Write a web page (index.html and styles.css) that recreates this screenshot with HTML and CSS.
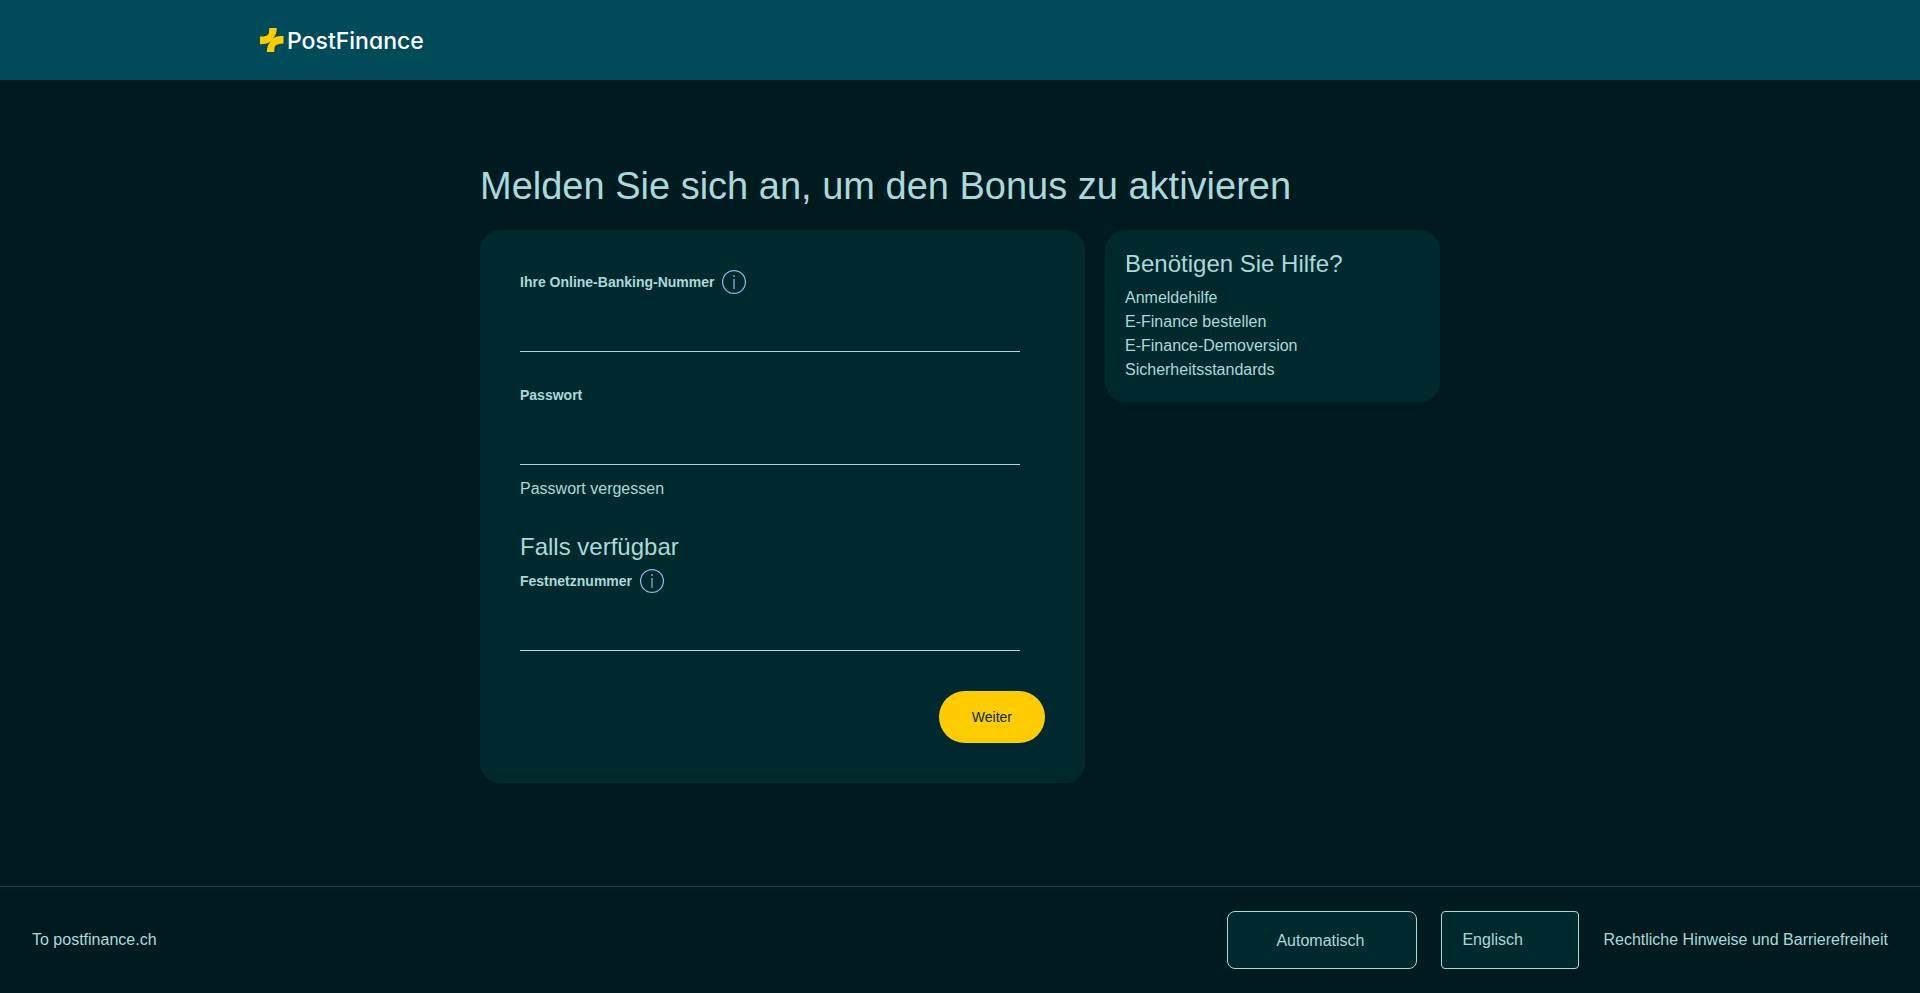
FILE: index.html
```html
<!DOCTYPE html>
<html lang="de">
<head>
<meta charset="utf-8">
<meta name="viewport" content="width=device-width, initial-scale=1">
<title>PostFinance – Login</title>
<link rel="stylesheet" href="styles.css">
</head>
<body>
<header class="site-header">
  <a class="logo" href="#">
    <svg class="logo-mark" viewBox="0 0 24 24" aria-hidden="true"><path d="M9.300 0H16.800C16.700 4.500 15.500 8 12.600 10.600C15.500 8.600 19 8 23.500 8V15.500C18 15.700 14.800 17 14.500 20L14.200 24H6.800C6.900 19.500 8 16.300 10.800 13.600C7.800 15.700 4.500 16.300 0 16.300V8.600C5.500 8.500 8.700 7.500 9 4.200Z"/></svg>
    <span class="logo-name">PostFinance</span>
  </a>
</header>
<main class="page">
  <h1 class="page-title">Melden Sie sich an, um den Bonus zu aktivieren</h1>
  <div class="columns">
    <form class="card login">
      <div class="field">
        <div class="field-head">
          <label class="label" for="number">Ihre Online-Banking-Nummer</label>
          <button class="info" type="button" aria-label="Information">
            <svg viewBox="0 0 24 24" aria-hidden="true"><circle cx="12" cy="12" r="11.400"/><path d="M12 5V7M12 9V19"/></svg>
          </button>
        </div>
        <input class="input" id="number" type="text">
      </div>
      <div class="field">
        <div class="field-head"><label class="label" for="password">Passwort</label></div>
        <input class="input" id="password" type="password">
      </div>
      <a class="link forgot" href="#">Passwort vergessen</a>
      <h2 class="subtitle">Falls verfügbar</h2>
      <div class="field">
        <div class="field-head">
          <label class="label" for="landline">Festnetznummer</label>
          <button class="info" type="button" aria-label="Information">
            <svg viewBox="0 0 24 24" aria-hidden="true"><circle cx="12" cy="12" r="11.400"/><path d="M12 5V7M12 9V19"/></svg>
          </button>
        </div>
        <input class="input" id="landline" type="text">
      </div>
      <button class="submit" type="submit">Weiter</button>
    </form>
    <aside class="card help">
      <h2 class="subtitle">Benötigen Sie Hilfe?</h2>
      <ul class="help-list">
        <li><a class="link" href="#">Anmeldehilfe</a></li>
        <li><a class="link" href="#">E-Finance bestellen</a></li>
        <li><a class="link" href="#">E-Finance-Demoversion</a></li>
        <li><a class="link" href="#">Sicherheitsstandards</a></li>
      </ul>
    </aside>
  </div>
</main>
<footer class="site-footer">
  <a class="link home" href="#">To postfinance.ch</a>
  <select class="select theme" aria-label="Darstellung"><option>Automatisch</option></select>
  <select class="select language" aria-label="Sprache"><option>Englisch</option></select>
  <a class="link" href="#">Rechtliche Hinweise und Barrierefreiheit</a>
</footer>
</body>
</html>
```
FILE: styles.css
```css
* { box-sizing: border-box; }

body {
  display: flex;
  flex-direction: column;
  min-height: 100vh;
  margin: 0;
  background: #001b20;
  color: #a8dadb;
  font: 16px/24px "Liberation Sans", Arial, sans-serif;
}

h1, h2, ul { margin: 0; padding: 0; font-weight: 400; }

.site-header {
  display: flex;
  align-items: center;
  height: 80px;
  padding: 0 260px;
  background: #004b5a;
}

.logo {
  display: flex;
  align-items: center;
  gap: 3px;
  color: #fff;
  text-decoration: none;
}
.logo-mark { width: 24px; height: 24px; fill: #fc0; }
.logo-name {
  padding-top: 2px;
  font: 500 23px/24px Inter, sans-serif;
  font-feature-settings: "cv11";
}

.page {
  flex: 1;
  width: 100%;
  max-width: 960px;
  margin: 0 auto;
  padding-top: 80px;
}
.page-title { margin-bottom: 18px; font-size: 38px; line-height: 52px; }

.columns {
  display: grid;
  grid-template-columns: 605fr 335fr;
  align-items: start;
  gap: 20px;
}

.card { border-radius: 20px; background: #00292d; }
.login { display: flex; flex-direction: column; padding: 40px; }
.help { padding: 18px 20px 20px; }

.field { display: flex; flex-direction: column; max-width: 500px; margin-bottom: 31px; }
.field-head { display: flex; align-items: center; gap: 8px; height: 24px; }
.label { font-size: 14px; font-weight: 700; }

.info {
  width: 24px;
  height: 24px;
  padding: 0;
  border: 0;
  background: none;
}
.info svg { display: block; fill: none; stroke: #86bfee; stroke-width: 1.2; }

.input {
  width: 100%;
  height: 58px;
  padding: 0;
  border: 0;
  border-bottom: 1px solid #a8dadb;
  border-radius: 0;
  outline: 0;
  background: transparent;
  color: inherit;
  font: inherit;
}

.link { color: inherit; text-decoration: none; }
.forgot { align-self: flex-start; margin: -19px 0 30px; }
.subtitle { margin-bottom: 6px; font-size: 24px; line-height: 32px; }

.submit {
  align-self: flex-end;
  height: 52px;
  margin-top: 9px;
  padding: 0 33px;
  border: 0;
  border-radius: 26px;
  background: #fc0;
  color: #00292d;
  font: 14px/20px "Liberation Sans", Arial, sans-serif;
}

.help-list { list-style: none; }

.site-footer {
  display: flex;
  align-items: center;
  gap: 24px;
  padding: 24px 32px;
  border-top: 1px solid #124353;
}
.home { margin-right: auto; }

.select {
  appearance: none;
  height: 58px;
  border: 1px solid #a8dadb;
  background: #00292d;
  color: inherit;
  font: inherit;
}
.theme { width: 190px; padding: 2px 48px 0; border-radius: 8px; }
.language { width: 138px; padding: 0 20px; border-radius: 4px; }
```
